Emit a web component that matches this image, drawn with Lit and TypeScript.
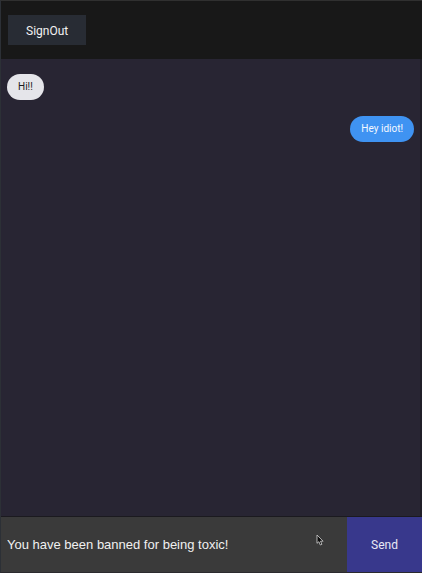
import { LitElement, html, css } from "lit";
import { customElement, state } from "lit/decorators.js";
import { classMap } from "lit/directives/class-map.js";

interface Message {
  text: string;
  sent: boolean;
}

@customElement("chat-message")
class ChatMessage extends LitElement {
  static properties = {
    text: { type: String },
    sent: { type: Boolean },
  };
  declare text: string;
  declare sent: boolean;

  static styles = css`
    :host {
      display: block;
    }
    .row {
      display: flex;
    }
    .row.sent {
      justify-content: flex-end;
    }
    .bubble {
      margin: 0;
      padding: 5px 11px;
      border-radius: 13px;
      background: #e5e5ea;
      color: #1c1c1e;
      font-size: 10px;
      line-height: 16px;
    }
    .sent .bubble {
      background: #3f93f2;
      color: #f4f8ff;
    }
  `;

  render() {
    return html`<div class=${classMap({ row: true, sent: this.sent })}>
      <p class="bubble">${this.text}</p>
    </div>`;
  }
}

@customElement("app-root")
class AppRoot extends LitElement {
  @state() private messages: Message[] = [
    { text: "Hi!!", sent: false },
    { text: "Hey idiot!", sent: true },
  ];

  static styles = css`
    :host {
      display: block;
      font-family: Roboto, "Liberation Sans", sans-serif;
    }
    * {
      box-sizing: border-box;
    }
    .app {
      position: relative;
      display: flex;
      flex-direction: column;
      min-height: 100vh;
      background: #282533;
      border-top: 1px solid #303030;
      border-left: 1px solid #2c3036;
      border-bottom: 1px solid #2b2a2e;
    }
    header {
      display: flex;
      padding: 14px 7px;
      background: #181818;
    }
    button {
      border: 0;
      margin: 0;
      font-family: inherit;
      font-size: 12px;
      cursor: pointer;
    }
    .signout {
      padding: 8px 18px 6px;
      background: #282c34;
      color: #f2f2f2;
      line-height: 16px;
    }
    main {
      flex: 1;
      display: flex;
      flex-direction: column;
      gap: 16px;
      padding: 15px 6px;
      border-right: 2px solid #201e28;
    }
    form {
      display: flex;
      height: 56px;
      border-top: 1px solid #1b1a1f;
    }
    input {
      flex: 1;
      min-width: 0;
      border: 0;
      border-radius: 0;
      outline: 0;
      padding: 0 6px;
      background: #3a3a3a;
      color: #f0f0f0;
      font-family: "Liberation Sans", sans-serif;
      font-size: 13px;
    }
    .send {
      padding: 0 24px;
      background: #38388c;
      color: #e8e8f4;
    }
    .pointer {
      position: absolute;
      right: 98px;
      bottom: 26px;
      width: 8px;
      height: 12px;
      pointer-events: none;
    }
  `;

  render() {
    return html`
      <div class="app">
        <header><button class="signout" type="button">SignOut</button></header>
        <main>
          ${this.messages.map(
            (m) => html`<chat-message .text=${m.text} .sent=${m.sent}></chat-message>`
          )}
        </main>
        <form @submit=${(e: Event) => e.preventDefault()}>
          <input type="text" aria-label="Message" value="You have been banned for being toxic!" />
          <button class="send" type="submit">Send</button>
        </form>
        <svg class="pointer" viewBox="0 0 8 12" aria-hidden="true">
          <path
            d="M1 1V9.3L2.9 7.7L4.3 11L5.9 10.3L4.5 7.2H7.1Z"
            fill="#0c0c0c"
            stroke="#c4c4c4"
            stroke-width="0.9"
            stroke-linejoin="round"
          />
        </svg>
      </div>
    `;
  }
}
